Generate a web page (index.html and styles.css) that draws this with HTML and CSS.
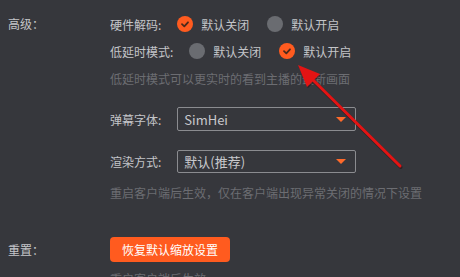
FILE: index.html
```html
<!DOCTYPE html>
<html lang="zh">
<head>
<meta charset="utf-8">
<link rel="stylesheet" href="styles.css">
</head>
<body>
<div class="page">
  <section class="section adv">
    <div class="sec-label">高级：</div>
    <div class="sec-body">
      <div class="row">
        <span class="label">硬件解码:</span>
        <span class="radio on"><svg viewBox="0 0 16 16"><path d="M5 8.2 L7.3 10.3 L11 6.3" /></svg></span>
        <span class="opt">默认关闭</span>
        <span class="radio off"></span>
        <span class="opt">默认开启</span>
      </div>
      <div class="row row2">
        <span class="label">低延时模式:</span>
        <span class="radio off"></span>
        <span class="opt">默认关闭</span>
        <span class="radio on"><svg viewBox="0 0 16 16"><path d="M5 8.2 L7.3 10.3 L11 6.3" /></svg></span>
        <span class="opt">默认开启</span>
      </div>
      <div class="hint hint1">低延时模式可以更实时的看到主播的最新画面</div>
      <div class="row select-row first">
        <span class="label">弹幕字体:</span>
        <div class="select"><span>SimHei</span><i class="caret"></i></div>
      </div>
      <div class="row select-row second">
        <span class="label">渲染方式:</span>
        <div class="select"><span>默认(推荐)</span><i class="caret"></i></div>
      </div>
      <div class="hint hint2">重启客户端后生效，仅在客户端出现异常关闭的情况下设置</div>
    </div>
  </section>
  <section class="section reset">
    <div class="sec-label">重置：</div>
    <div class="sec-body">
      <button class="btn">恢复默认缩放设置</button>
      <div class="hint hint3">重启客户端后生效</div>
    </div>
  </section>
  <svg class="arrow" viewBox="0 0 460 277" width="460" height="277">
    <g transform="translate(0.8,1.2)" opacity="0.45">
      <line x1="310" y1="77" x2="400" y2="166" stroke="#2a0a0a" stroke-width="3.4" stroke-linecap="round"/>
      <polygon points="298,65 307,87 320,74" fill="#2a0a0a"/>
    </g>
    <line x1="310" y1="77" x2="400" y2="166" stroke="#e31414" stroke-width="3" stroke-linecap="round"/>
    <polygon points="298,65 307,87 320,74" fill="#e31414"/>
  </svg>
</div>
</body>
</html>
```
FILE: styles.css
```css
* { box-sizing: border-box; }
html, body {
  margin: 0;
  padding: 0;
  background: #36373c;
  width: 460px;
  height: 277px;
  overflow: hidden;
}
body {
  font-family: "Noto Sans CJK SC", "Noto Sans", sans-serif;
  font-size: 12px;
  color: #c4c5c9;
}
.page {
  position: relative;
  width: 460px;
  height: 277px;
  padding: 12px 0 0 8px;
}
.section {
  display: grid;
  grid-template-columns: 102px 1fr;
}
.sec-label {
  height: 24px;
  line-height: 24px;
  color: #c4c5c9;
}
.sec-body {
  display: flex;
  flex-direction: column;
}
.row {
  display: flex;
  align-items: center;
  height: 24px;
}
.row2 { margin-top: 3px; }
.label {
  margin-right: 16px;
  white-space: nowrap;
}
.radio {
  width: 16px;
  height: 16px;
  border-radius: 50%;
  flex: none;
  display: inline-flex;
  margin-right: 8px;
}
.radio.on { background: #ff5b1f; }
.radio.off { background: #6a6c71; }
.radio svg { width: 16px; height: 16px; }
.radio path {
  fill: none;
  stroke: #4a2a1c;
  stroke-width: 1.8;
  stroke-linecap: round;
  stroke-linejoin: round;
}
.opt { margin-right: 18px; white-space: nowrap; }
.hint {
  color: #6c6d72;
  line-height: 16px;
  height: 16px;
  white-space: nowrap;
}
.hint1 { margin-top: 8px; }
.select-row.first { margin-top: 20px; }
.select-row.second { margin-top: 19px; height: 23px; }
.select {
  width: 179px;
  height: 100%;
  border: 1px solid #8b8c90;
  border-radius: 2px;
  display: flex;
  align-items: center;
  justify-content: space-between;
  padding: 0 9px 0 6px;
  font-size: 13px;
  color: #c8c9cd;
}
.caret {
  width: 0;
  height: 0;
  border-left: 5px solid transparent;
  border-right: 5px solid transparent;
  border-top: 5px solid #ff6a2a;
}
.hint2 { margin-top: 12px; }
.reset { margin-top: 36px; }
.reset .sec-label { height: 25px; line-height: 25px; }
.btn {
  width: 120px;
  height: 25px;
  border: none;
  border-radius: 4px;
  background: #ff5b1f;
  color: #ffffff;
  font-family: inherit;
  font-size: 12px;
  padding: 0;
  cursor: pointer;
}
.hint3 { margin-top: 9px; }
.arrow {
  position: absolute;
  left: 0;
  top: 0;
  pointer-events: none;
}
```
